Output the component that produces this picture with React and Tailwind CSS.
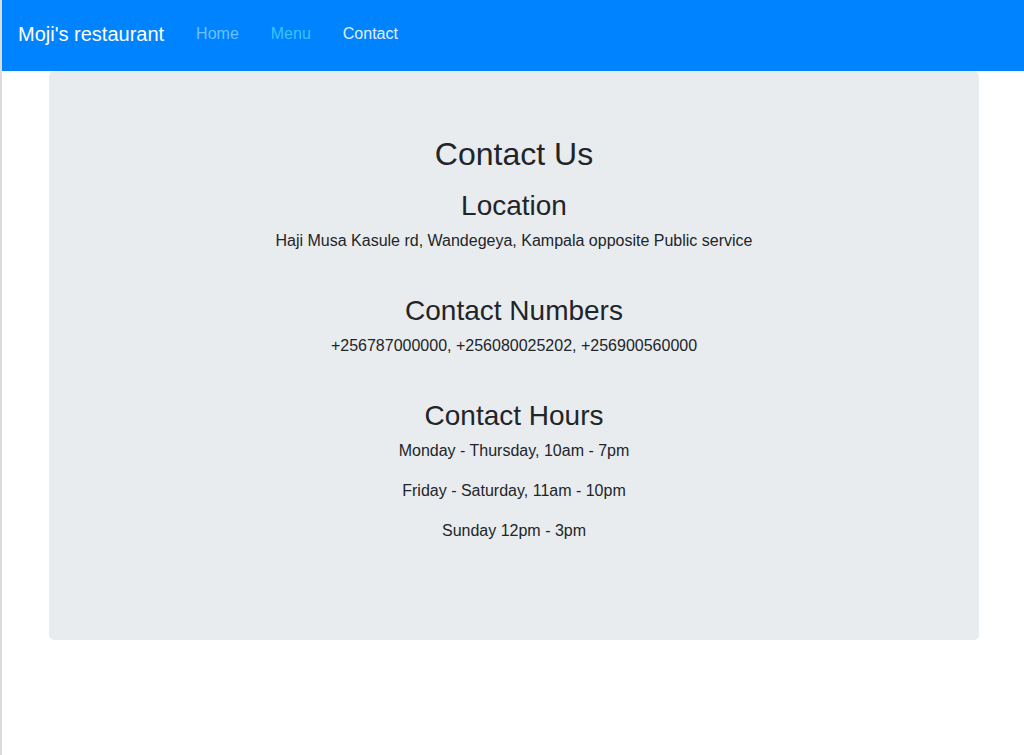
export default function App() {
  const hours = ["Monday - Thursday, 10am - 7pm", "Friday - Saturday, 11am - 10pm", "Sunday 12pm - 3pm"];

  return (
    <div className="min-h-[755px] border-l-2 border-[#dcdcdc] bg-white text-[#212529]" style={{ fontFamily: '"Liberation Sans", Arial, sans-serif' }}>
      <nav className="h-[71px] bg-[#0083ff] flex items-center px-4 pb-[3px]">
        <a className="text-[20px] leading-[30px] text-white mr-4">Moji's restaurant</a>
        <div className="flex text-[16px] leading-6">
          <a className="px-4 text-[#6cc2ff]">Home</a>
          <a className="px-4 text-[#3cc2ff]">Menu</a>
          <a className="px-4 text-[#e0efff]">Contact</a>
        </div>
      </nav>

      <div className="mx-auto w-[960px] pl-[16px] pr-[14px]">
        <div className="bg-[#e9ecef] rounded-[5px] pt-[64px] pb-[97px] px-8 text-center">
          <h2 className="text-[32px] leading-[38px] mb-[16px]">Contact Us</h2>

          <h3 className="text-[28px] leading-[34px] mb-[6px]">Location</h3>
          <p className="text-[16px] leading-6">Haji Musa Kasule rd, Wandegeya, Kampala opposite Public service</p>

          <h3 className="text-[28px] leading-[34px] mt-[41px] mb-[6px]">Contact Numbers</h3>
          <p className="text-[16px] leading-6">+256787000000, +256080025202, +256900560000</p>

          <h3 className="text-[28px] leading-[34px] mt-[41px] mb-[6px]">Contact Hours</h3>
          <div className="flex flex-col gap-4">
            {hours.map((h) => (
              <p key={h} className="text-[16px] leading-6">{h}</p>
            ))}
          </div>
        </div>
      </div>
    </div>
  );
}
